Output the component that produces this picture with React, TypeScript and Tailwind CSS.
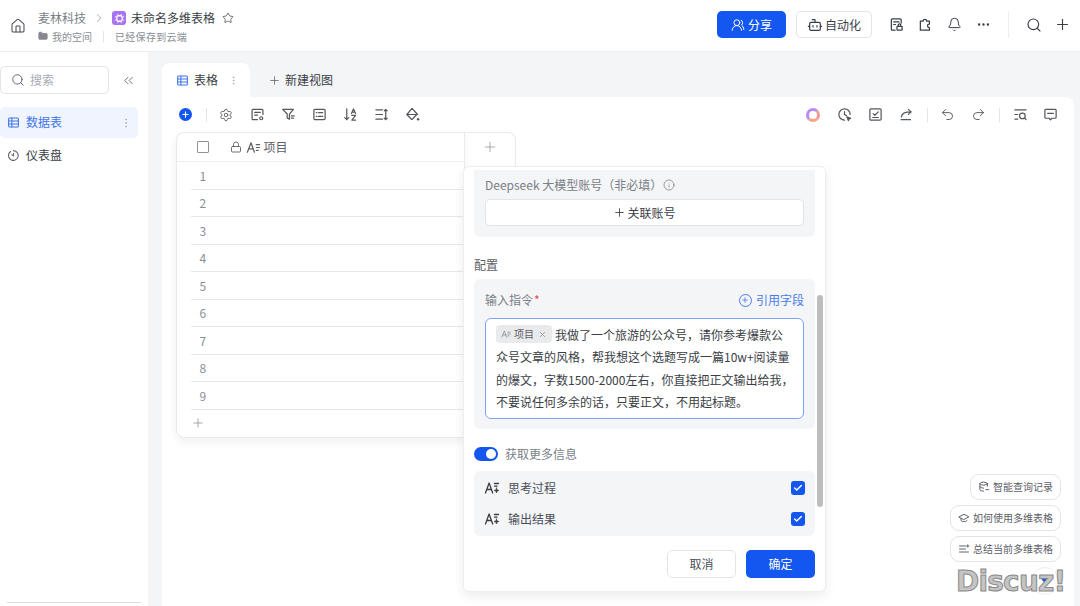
import React from 'react'
import {
  Bell,
  Bot,
  ChevronRight,
  ChevronsLeft,
  Ellipsis,
  EllipsisVertical,
  Folder,
  House,
  Info,
  Lock,
  Plus,
  Search,
  Settings,
  Star,
  Undo2,
  Redo2,
  UsersRound,
  X,
  Check
} from 'lucide-react'

type IconProps = { className?: string }

const Svg: React.FC<React.PropsWithChildren<IconProps>> = ({ className, children }) => (
  <svg
    viewBox="0 0 16 16"
    fill="none"
    stroke="currentColor"
    strokeWidth="1.3"
    strokeLinecap="round"
    strokeLinejoin="round"
    className={className}
  >
    {children}
  </svg>
)

const GridIcon = ({ className }: IconProps) => (
  <Svg className={className}>
    <rect x="2" y="2.5" width="12" height="11" rx="1.2" />
    <path d="M2 6.2h12M2 9.8h12M6 2.5v11" />
  </Svg>
)

const FormIcon = ({ className }: IconProps) => (
  <Svg className={className}>
    <path d="M8 13.5H3.2a1 1 0 0 1-1-1v-9a1 1 0 0 1 1-1h9.600a1 1 0 0 1 1 1V8" />
    <path d="M5 5.800h6M5 8.600h3" />
    <circle cx="12" cy="12" r="1.600" />
  </Svg>
)

const FilterIcon = ({ className }: IconProps) => (
  <Svg className={className}>
    <path d="M1.800 2.500h11.400L9 7.500v5.500l-2.400-1.400V7.500z" />
    <path d="M11 9.500h3M11 11.800h2.400" />
  </Svg>
)

const ListBoxIcon = ({ className }: IconProps) => (
  <Svg className={className}>
    <rect x="2" y="2.500" width="12" height="11" rx="1.200" />
    <path d="M4.600 6h.6M7 6h4.400M4.600 10h.6M7 10h4.400" />
  </Svg>
)

const SortIcon = ({ className }: IconProps) => (
  <Svg className={className}>
    <path d="M4 2v11.500M1.800 11.300 4 13.500l2.200-2.200" />
    <path d="m9 7 2.200-5L13.400 7M9.800 5.400h2.800M9.400 9h4l-4 5h4" />
  </Svg>
)

const RowHeightIcon = ({ className }: IconProps) => (
  <Svg className={className}>
    <path d="M2 3h7M2 8h7M2 13h7M12.500 2.500v11M11 4l1.500-1.500L14 4M11 12l1.500 1.500L14 12" />
  </Svg>
)

const PaintIcon = ({ className }: IconProps) => (
  <Svg className={className}>
    <path d="M7.500 1.500 13 7.500 8 12.800a1 1 0 0 1-1.400 0L2 8z" />
    <path d="M2 8h11" />
    <circle cx="14" cy="13" r="1.300" fill="currentColor" stroke="none" />
  </Svg>
)

const HistoryIcon = ({ className }: IconProps) => (
  <Svg className={className}>
    <path d="M14 8a6 6 0 1 0-6 6" />
    <path d="M8 4.800V8l2 1.200" />
    <path d="m10.500 10.500 4 1.600-1.700.7-.7 1.700z" fill="currentColor" />
  </Svg>
)

const CheckBoxIcon = ({ className }: IconProps) => (
  <Svg className={className}>
    <rect x="2" y="2" width="12" height="12" rx="1.200" />
    <path d="m5.500 7 1.800 1.800L11 5.200M5 11.200h6" />
  </Svg>
)

const ShareArrowIcon = ({ className }: IconProps) => (
  <Svg className={className}>
    <path d="M2.200 13.500h10M2.500 10.500C3 7 6 5.200 12.500 5.200M10 2.500l3 2.700-3 2.700" />
  </Svg>
)

const FindIcon = ({ className }: IconProps) => (
  <Svg className={className}>
    <path d="M2 3h12M2 8h3M2 13h3" />
    <circle cx="10" cy="9.500" r="3" />
    <path d="m12.200 11.700 1.800 1.800" />
  </Svg>
)

const CommentIcon = ({ className }: IconProps) => (
  <Svg className={className}>
    <path d="M3 2.500h10a1 1 0 0 1 1 1v7.500a1 1 0 0 1-1 1H9.500L8 13.800 6.500 12H3a1 1 0 0 1-1-1V3.500a1 1 0 0 1 1-1z" />
    <path d="M5 6.800h6" />
  </Svg>
)

const LockDocIcon = ({ className }: IconProps) => (
  <Svg className={className}>
    <path d="M6.500 14H3.500a1 1 0 0 1-1-1V3a1 1 0 0 1 1-1h8.500a1 1 0 0 1 1 1v3.500" />
    <path d="M5 5.200h5.500M5 8h2" />
    <rect x="8.500" y="10" width="5.500" height="4" rx=".6" />
    <path d="M9.800 10V8.800a1.400 1.400 0 0 1 2.800 0V10" />
  </Svg>
)

const PuzzleIcon = ({ className }: IconProps) => (
  <Svg className={className}>
    <path d="M2.500 4.500h3c-.3-2.700 4-2.700 3.700 0h3v3c-2.700-.3-2.700 4 0 3.700v2.800H2.500z" />
  </Svg>
)

const AzIcon = ({ className }: IconProps) => (
  <Svg className={className}>
    <path d="m1.500 13 3.800-10L9 13M3 9.500h4.600M11 5h3.500M11 8h3.500M11 11h2" />
  </Svg>
)

const AzSparkIcon = ({ className }: IconProps) => (
  <Svg className={className}>
    <path d="m1.500 13 3.600-10 3.600 10M2.900 9.500h4.400M10.500 3.500h4M10.500 6.200h2.500" />
    <path
      d="M12.500 8c.3 1.700.8 2.200 2.500 2.500-1.700.3-2.200.8-2.500 2.500-.3-1.700-.8-2.200-2.500-2.500 1.700-.3 2.200-.8 2.500-2.500z"
      fill="currentColor"
      strokeWidth="0.600"
    />
  </Svg>
)

const ClockIcon = ({ className }: IconProps) => (
  <Svg className={className}>
    <path d="M4.500 3A6 6 0 1 0 8 2" />
    <path d="M8 5.500 8 8.500 5.800 7" />
  </Svg>
)

const DbIcon = ({ className }: IconProps) => (
  <Svg className={className}>
    <ellipse cx="7.500" cy="3.500" rx="5" ry="2" />
    <path d="M2.500 3.500v8c0 1 2 2 5 2M12.500 3.500V7M2.500 7.500c0 1 2 2 5 2" />
    <path d="M10.500 11.500h4" />
  </Svg>
)

const CapIcon = ({ className }: IconProps) => (
  <Svg className={className}>
    <path d="M1.500 6.500 8 3l6.500 3.500L8 10z" />
    <path d="M4 8.500v3C6 13.500 10 13.500 12 11.500" />
  </Svg>
)

const LinesIcon = ({ className }: IconProps) => (
  <Svg className={className}>
    <path d="M2 4h8M2 8h8M2 12h12M13 2.500v3M11.500 4h3" />
  </Svg>
)

const AppLogo = () => (
  <div className="flex h-[14px] w-[14px] items-center justify-center rounded-[3px] bg-[#a874f2]">
    <svg viewBox="0 0 10 10" className="h-[11px] w-[11px]" fill="none" stroke="#fff" strokeWidth="1.200">
      <rect x="2.500" y="2.500" width="5" height="5" rx="1.500" />
      <path d="M3.500 .8v1M6.500 .8v1M3.500 8.200v1M6.500 8.200v1M.8 3.500h1M.8 6.500h1M8.200 3.500h1M8.200 6.500h1" strokeWidth="0.800" />
    </svg>
  </div>
)

const Header = () => (
  <header className="flex h-[52px] shrink-0 items-center border-b border-[#eceef1] bg-white pl-[10px] pr-[9px]">
    <House className="h-[16px] w-[16px] text-[#4a4f57]" strokeWidth={1.6} />
    <div className="ml-[12px] flex flex-col">
      <div className="flex h-[20px] items-center text-[12px]">
        <span className="text-[#7a7f87]">麦林科技</span>
        <ChevronRight className="ml-[6px] mr-[6px] h-[14px] w-[14px] text-[#9a9ea5]" strokeWidth={1.5} />
        <AppLogo />
        <span className="ml-[5px] text-[#3a3e45]">未命名多维表格</span>
        <Star className="ml-[7px] h-[12px] w-[12px] text-[#4a4f57]" strokeWidth={1.6} />
      </div>
      <div className="mt-[1px] flex h-[14px] items-center text-[10px] text-[#8a8e95]">
        <Folder className="h-[10px] w-[10px] fill-[#85898f] text-[#85898f]" />
        <span className="ml-[4px]">我的空间</span>
        <div className="mx-[11px] h-[11px] w-px bg-[#e3e5e8]" />
        <span className="tracking-[0.300px]">已经保存到云端</span>
      </div>
    </div>
    <div className="mb-[2px] ml-auto flex items-center">
      <button className="mr-px flex h-[27px] w-[69px] items-center justify-center gap-[3px] rounded-[5px] bg-[#1456f0] text-[12px] text-white">
        <UsersRound className="h-[14px] w-[14px]" strokeWidth={1.7} />
        分享
      </button>
      <button className="ml-[9px] mr-px flex h-[27px] w-[76px] items-center justify-center gap-[2px] rounded-[5px] border border-[#e2e4e8] bg-white text-[12px] text-[#3a3e45]">
        <Bot className="h-[16px] w-[16px]" strokeWidth={1.8} />
        自动化
      </button>
      <div className="ml-[16px] flex items-center gap-[14px] text-[#3a3e45]">
        <LockDocIcon className="h-[15px] w-[15px]" />
        <PuzzleIcon className="h-[15px] w-[15px]" />
        <Bell className="h-[15px] w-[15px]" strokeWidth={1.6} />
        <Ellipsis className="h-[15px] w-[15px]" strokeWidth={1.8} />
      </div>
      <div className="ml-[17px] h-[27px] w-px bg-[#eceef1]" />
      <Search className="ml-[17px] h-[16px] w-[16px] text-[#3a3e45]" strokeWidth={1.7} />
      <Plus className="ml-[12px] h-[17px] w-[17px] text-[#3a3e45]" strokeWidth={1.6} />
    </div>
  </header>
)

const Sidebar = () => (
  <aside className="flex w-[148px] shrink-0 flex-col bg-white pt-[14px]">
    <div className="flex items-center">
      <div className="flex h-[28px] w-[109px] items-center rounded-[5px] border border-[#e2e4e8] pl-[10px] text-[12px] text-[#a8abb1]">
        <Search className="h-[14px] w-[14px] text-[#5c6067]" strokeWidth={1.6} />
        <span className="ml-[5px] pb-[1px]">搜索</span>
      </div>
      <ChevronsLeft className="ml-[12px] h-[15px] w-[15px] text-[#5c6067]" strokeWidth={1.4} />
    </div>
    <div className="mt-[13px] flex h-[31px] w-[138px] items-center rounded-[5px] bg-[#eff4fe] pl-[7px] text-[12px] text-[#3f74ea]">
      <GridIcon className="h-[13px] w-[13px]" />
      <span className="ml-[6px] pb-[1px]">数据表</span>
      <EllipsisVertical className="ml-auto mr-[6px] h-[12px] w-[12px] text-[#a0a4aa]" strokeWidth={1.5} />
    </div>
    <div className="mt-[6px] flex h-[22px] items-center pl-[7px] text-[12px] text-[#3a3e45]">
      <ClockIcon className="h-[13px] w-[13px] text-[#5c6067]" />
      <span className="ml-[6px]">仪表盘</span>
    </div>
    <div className="mx-[7px] mt-auto mb-[3px] h-px bg-[#dcdee1]" />
  </aside>
)

const ToolIcon: React.FC<React.PropsWithChildren> = ({ children }) => (
  <div className="flex h-[16px] w-[16px] items-center justify-center">{children}</div>
)

const Toolbar = () => (
  <div className="flex h-[35px] items-center pl-[17px] pr-[16px] text-[#53575e]">
    <div className="flex h-[13px] w-[13px] items-center justify-center rounded-full bg-[#1456f0]">
      <Plus className="h-[9px] w-[9px] text-white" strokeWidth={3} />
    </div>
    <div className="ml-[14px] h-[14px] w-px bg-[#e3e5e8]" />
    <div className="ml-[11px] flex items-center gap-[15px]">
      <ToolIcon><Settings className="h-[14px] w-[14px]" strokeWidth={1.5} /></ToolIcon>
      <ToolIcon><FormIcon className="h-[15px] w-[15px]" /></ToolIcon>
      <ToolIcon><FilterIcon className="h-[15px] w-[15px]" /></ToolIcon>
      <ToolIcon><ListBoxIcon className="h-[15px] w-[15px]" /></ToolIcon>
      <ToolIcon><SortIcon className="h-[15px] w-[15px]" /></ToolIcon>
      <ToolIcon><RowHeightIcon className="h-[15px] w-[15px]" /></ToolIcon>
      <ToolIcon><PaintIcon className="h-[15px] w-[15px]" /></ToolIcon>
    </div>
    <div className="ml-auto flex items-center">
      <div className="h-[14px] w-[14px] rounded-full border-[3px] border-[#b98af2] border-b-[#f5a67d] border-r-[#f09a9a]" />
      <div className="ml-[16px] flex items-center gap-[15px]">
        <ToolIcon><HistoryIcon className="h-[15px] w-[15px]" /></ToolIcon>
        <ToolIcon><CheckBoxIcon className="h-[15px] w-[15px]" /></ToolIcon>
        <ToolIcon><ShareArrowIcon className="h-[15px] w-[15px]" /></ToolIcon>
      </div>
      <div className="ml-[13px] h-[14px] w-px bg-[#e3e5e8]" />
      <div className="ml-[11px] flex items-center gap-[15px]">
        <ToolIcon><Undo2 className="h-[15px] w-[15px]" strokeWidth={1.5} /></ToolIcon>
        <ToolIcon><Redo2 className="h-[15px] w-[15px]" strokeWidth={1.5} /></ToolIcon>
      </div>
      <div className="ml-[13px] h-[14px] w-px bg-[#e3e5e8]" />
      <div className="ml-[12px] flex items-center gap-[14px]">
        <ToolIcon><FindIcon className="h-[15px] w-[15px]" /></ToolIcon>
        <ToolIcon><CommentIcon className="h-[15px] w-[15px]" /></ToolIcon>
      </div>
    </div>
  </div>
)

const rows = [1, 2, 3, 4, 5, 6, 7, 8, 9]

const Table = () => (
  <div className="ml-[13.500px] flex items-start">
    <div className="w-[288px] rounded-l-[8px] border-y border-l border-[#e8eaed] shadow-[0_4px_8px_rgba(0,0,0,0.06)]">
      <div className="flex h-[29px] items-center border-b border-[#eceef1] pl-[20px] text-[12px] text-[#5c6067]">
        <div className="h-[12px] w-[12px] rounded-[1px] border border-[#8f9399]" />
        <Lock className="ml-[21px] h-[12px] w-[12px]" strokeWidth={1.8} />
        <AzIcon className="ml-[4px] h-[15px] w-[15px]" />
        <span className="ml-[3px] pb-[1px]">项目</span>
      </div>
      {rows.map((n) => (
        <div key={n} className="ml-[14px] flex h-[27.500px] items-center border-b border-[#e6e8eb] pl-[9px] pt-[1px] text-[12px] text-[#8a8e95]">
          {n}
        </div>
      ))}
      <div className="flex h-[27px] items-center pl-[14px]">
        <Plus className="h-[14px] w-[14px] text-[#8f9399]" strokeWidth={1.4} />
      </div>
    </div>
    <div className="flex h-[50px] w-[52px] items-start justify-center rounded-tr-[8px] border-x border-t border-[#e8eaed] pt-[6px]">
      <Plus className="h-[16px] w-[16px] text-[#9a9ea5]" strokeWidth={1.3} />
    </div>
  </div>
)

const FieldOption = ({ label }: { label: string }) => (
  <div className="flex h-[31px] items-center pl-[10px] pr-[10px] text-[12px] text-[#4a4f57]">
    <AzSparkIcon className="h-[16px] w-[16px] text-[#3a3e45]" />
    <span className="ml-[8px]">{label}</span>
    <div className="ml-auto flex h-[14px] w-[14px] items-center justify-center rounded-[3px] bg-[#1456f0]">
      <Check className="h-[10px] w-[10px] text-white" strokeWidth={3.5} />
    </div>
  </div>
)

const Popover = () => (
  <div className="absolute left-[463px] top-[166px] flex h-[426px] w-[363px] flex-col rounded-[6px] border border-[#eceef1] bg-white pl-[10px] pr-[10px] pt-[3px] shadow-[0_4px_12px_rgba(0,0,0,0.08)]">
    <div className="absolute right-[2px] top-[128px] h-[212px] w-[6px] rounded-full bg-[#bdbdbd]" />
    <div className="h-[67px] w-[341px] rounded-b-[6px] bg-[#f4f5f7] px-[11px] pt-[6px]">
      <div className="flex h-[18px] items-center text-[12px] text-[#7a7f87]">
        Deepseek 大模型账号（非必填）
        <Info className="ml-[1px] h-[12px] w-[12px]" strokeWidth={1.5} />
      </div>
      <div className="mt-[5px] flex h-[27px] items-center justify-center rounded-[5px] border border-[#e2e4e8] bg-white text-[12px] text-[#3a3e45]">
        <Plus className="mr-[1px] h-[13px] w-[13px]" strokeWidth={1.6} />
        关联账号
      </div>
    </div>
    <div className="mt-[19px] h-[18px] text-[12px] leading-[18px] text-[#5c6067]">配置</div>
    <div className="mt-[5px] h-[150px] w-[341px] rounded-[6px] bg-[#f4f5f7] px-[11px] pt-[12px]">
      <div className="flex h-[18px] items-center text-[12px] text-[#7a7f87]">
        输入指令<span className="ml-[1px] text-[#e5484d]">*</span>
        <div className="ml-auto flex items-center text-[#4a7ceb]">
          <div className="mr-[4px] flex h-[13px] w-[13px] items-center justify-center rounded-full border-[1.300px] border-[#4a7ceb]">
            <Plus className="h-[8px] w-[8px]" strokeWidth={2.5} />
          </div>
          引用字段
        </div>
      </div>
      <div className="mt-[9px] h-[101px] rounded-[6px] border border-[#7ea3f5] bg-white pl-[10px] pr-[9px] pt-[5px] text-[12px] leading-[22.400px] text-[#3a3e45]">
        <span className="mr-[3px] inline-flex h-[18px] items-center rounded-[4px] bg-[#e8eaec] px-[5px] align-[1px] text-[10px] text-[#5c6067]">
          <AzIcon className="h-[10px] w-[10px] text-[#8a8e95]" />
          <span className="ml-[3px]">项目</span>
          <X className="ml-[4px] h-[9px] w-[9px] text-[#8a8e95]" />
        </span>
        我做了一个旅游的公众号，请你参考爆款公众号文章的风格，帮我想这个选题写成一篇10w+阅读量的爆文，字数1500-2000左右，你直接把正文输出给我，不要说任何多余的话，只要正文，不用起标题。
      </div>
    </div>
    <div className="mt-[17px] flex h-[16px] items-center text-[12px] text-[#7a7f87]">
      <div className="flex h-[14px] w-[24px] items-center justify-end rounded-full bg-[#1456f0] pr-[2px]">
        <div className="h-[10px] w-[10px] rounded-full bg-white" />
      </div>
      <span className="ml-[7px]">获取更多信息</span>
    </div>
    <div className="mt-[9px] w-[341px] rounded-[6px] bg-[#f4f5f7] py-[1.500px]">
      <FieldOption label="思考过程" />
      <FieldOption label="输出结果" />
    </div>
    <div className="mt-[14px] flex w-[341px] justify-end gap-[10px] text-[12px]">
      <button className="h-[28px] w-[69px] rounded-[5px] border border-[#e2e4e8] bg-white text-[#4a4f57]">取消</button>
      <button className="h-[28px] w-[69px] rounded-[5px] bg-[#1456f0] text-white">确定</button>
    </div>
  </div>
)

const Pill: React.FC<React.PropsWithChildren<{ label: string }>> = ({ label, children }) => (
  <div className="flex h-[26px] items-center gap-[3px] rounded-[9px] border border-[#e2e4e8] bg-white px-[7px] pb-[1px] text-[10px] text-[#5c6067]">
    {children}
    {label}
  </div>
)

const Floating = () => (
  <div className="absolute right-[19px] top-[474px] flex flex-col items-end gap-[5px]">
    <Pill label="智能查询记录">
      <DbIcon className="h-[12px] w-[12px]" />
    </Pill>
    <Pill label="如何使用多维表格">
      <CapIcon className="h-[12px] w-[12px]" />
    </Pill>
    <Pill label="总结当前多维表格">
      <LinesIcon className="h-[12px] w-[12px]" />
    </Pill>
  </div>
)

const Watermark = () => (
  <>
    <div className="absolute left-[1031px] top-[567px] flex h-[28px] w-[28px] items-center justify-center rounded-full border border-[#eceef1] bg-white">
      <svg viewBox="0 0 12 10" className="h-[8px] w-[10px]">
        <path d="M0 1h12L7 9z" fill="#1456f0" />
      </svg>
    </div>
    <div className="absolute left-[956px] top-[564px] font-['DejaVu_Sans',sans-serif] text-[28px] font-bold leading-[36px] tracking-[-0.800px] text-[#c4c4c4] [-webkit-text-stroke:1px_#8a8a8a]">
      Discuz!
    </div>
  </>
)

export default function App() {
  return (
    <div className="relative flex h-[606px] w-[1080px] flex-col overflow-hidden bg-white font-['Noto_Sans_CJK_SC',sans-serif]">
      <Header />
      <div className="flex min-h-0 flex-1">
        <Sidebar />
        <main className="flex min-w-0 flex-1 flex-col bg-[#f4f5f7] pl-[14px] pr-[6px] pt-[11px]">
          <div className="flex h-[34px] shrink-0 items-center text-[12px] text-[#3a3e45]">
            <div className="flex h-full w-[88px] items-center rounded-t-[8px] bg-white pl-[14px]">
              <GridIcon className="h-[13px] w-[13px] text-[#3f74ea]" />
              <span className="ml-[5px]">表格</span>
              <EllipsisVertical className="ml-[10px] h-[11px] w-[11px] text-[#a0a4aa]" strokeWidth={1.5} />
            </div>
            <Plus className="ml-[18px] h-[13px] w-[13px] text-[#5c6067]" strokeWidth={1.4} />
            <span className="ml-[4px]">新建视图</span>
          </div>
          <div className="flex-1 rounded-tr-[8px] bg-white">
            <Toolbar />
            <Table />
          </div>
        </main>
      </div>
      <Popover />
      <Floating />
      <Watermark />
    </div>
  )
}
